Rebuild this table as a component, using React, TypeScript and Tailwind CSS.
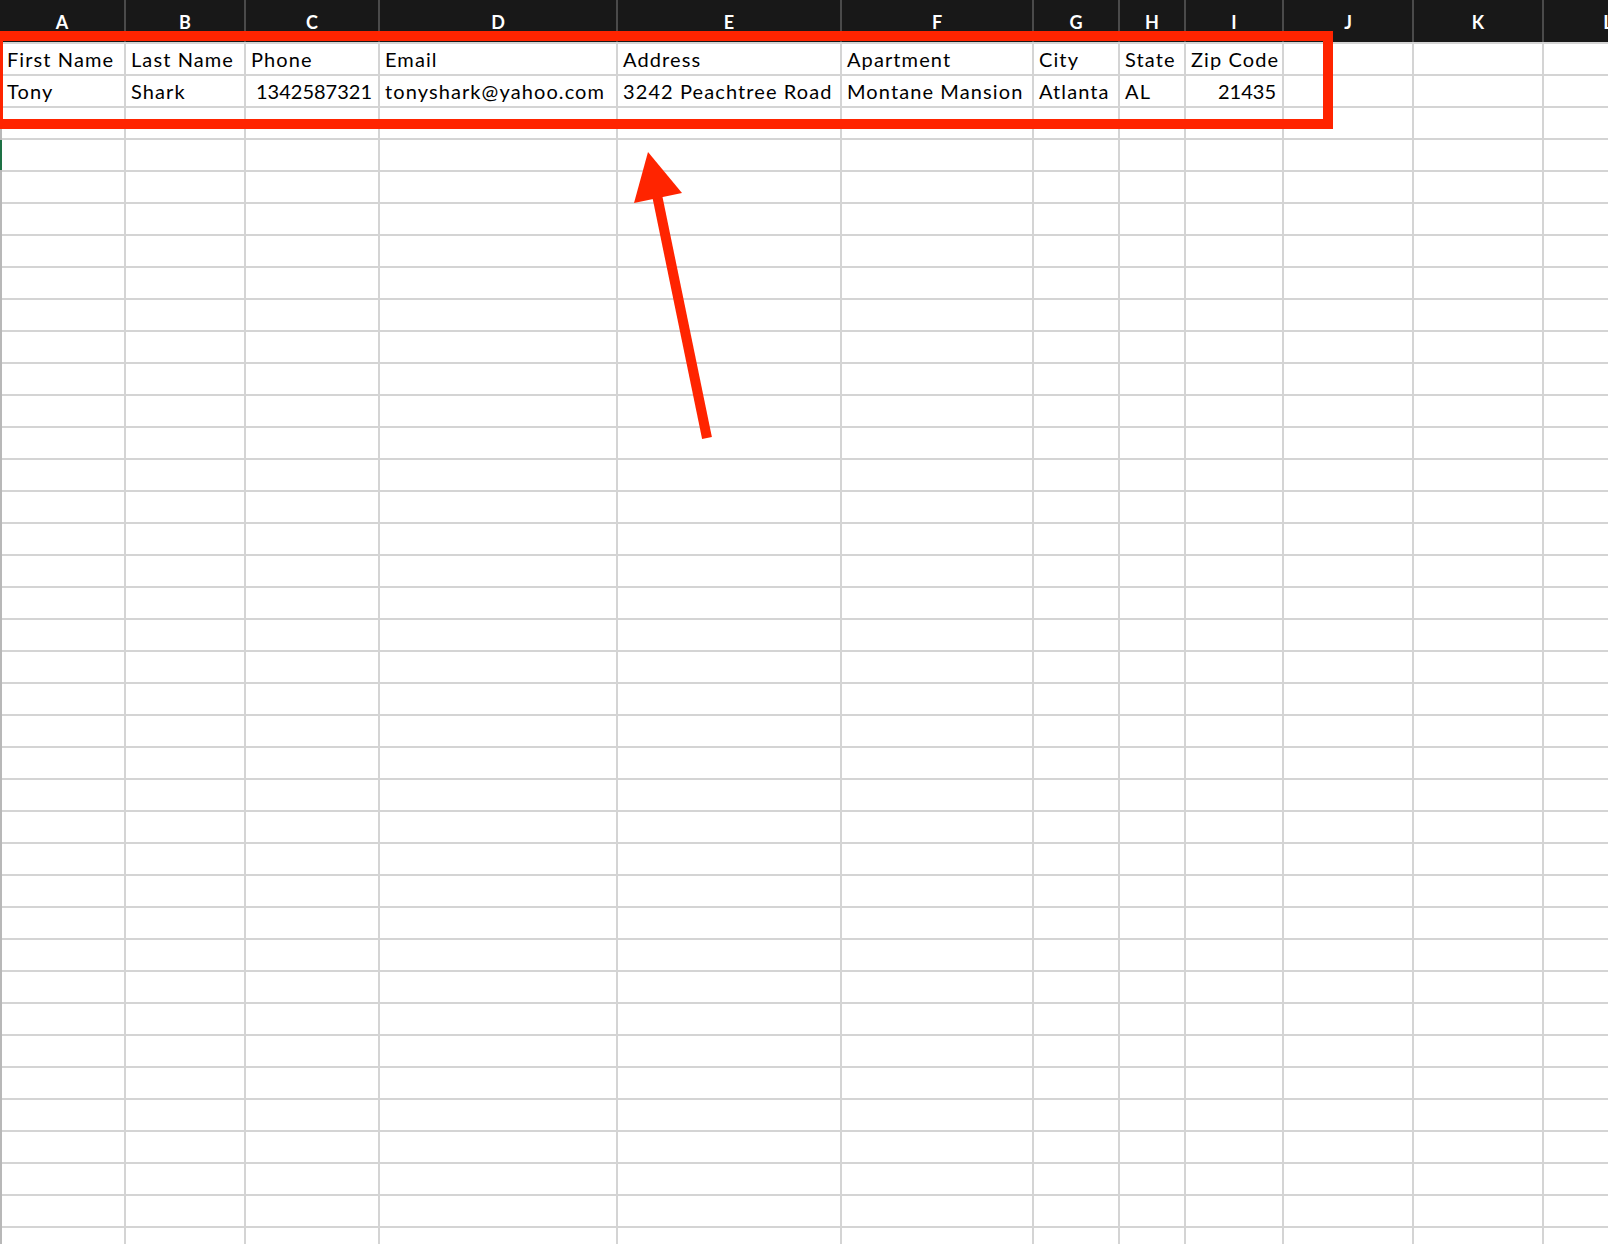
const columns = [
  { key: "A", width: 126 },
  { key: "B", width: 120 },
  { key: "C", width: 134 },
  { key: "D", width: 238 },
  { key: "E", width: 224 },
  { key: "F", width: 192 },
  { key: "G", width: 86 },
  { key: "H", width: 66 },
  { key: "I", width: 98 },
  { key: "J", width: 130 },
  { key: "K", width: 130 },
  { key: "L", width: 130 },
];

// cell values per row; right = numbers aligned right like Excel
const data: { text: string; right?: boolean }[][] = [
  [
    { text: "First Name" },
    { text: "Last Name" },
    { text: "Phone" },
    { text: "Email" },
    { text: "Address" },
    { text: "Apartment" },
    { text: "City" },
    { text: "State" },
    { text: "Zip Code" },
  ],
  [
    { text: "Tony" },
    { text: "Shark" },
    { text: "1342587321", right: true },
    { text: "tonyshark@yahoo.com" },
    { text: "3242 Peachtree Road" },
    { text: "Montane Mansion" },
    { text: "Atlanta" },
    { text: "AL" },
    { text: "21435", right: true },
  ],
];

const ROWS = 38;

export default function App() {
  return (
    <div
      className="relative w-[1608px] h-[1244px] overflow-hidden bg-white"
      style={{ fontFamily: "Lato, 'Open Sans', sans-serif" }}
    >
      {/* column letters */}
      <div className="flex h-[42px] bg-[#181818]">
        {columns.map((c) => (
          <div
            key={c.key}
            className="shrink-0 flex items-end justify-center pb-[11px] border-r-2 border-[#4a4a4a] text-white text-[18px] font-bold leading-none"
            style={{ width: c.width }}
          >
            {c.key}
          </div>
        ))}
      </div>

      {/* grid */}
      <div className="border-l-2 border-[#b8b8b8]">
        {Array.from({ length: ROWS }).map((_, r) => (
          <div key={r} className="flex h-[32px] border-t-2 border-[#d4d4d4]">
            {columns.map((c, ci) => {
              const cell = data[r]?.[ci];
              return (
                <div
                  key={c.key}
                  className={`shrink-0 flex items-end pb-[5px] border-r-2 border-[#d4d4d4] text-[20px] leading-[20px] text-black whitespace-nowrap overflow-hidden ${
                    cell?.right ? "justify-end pr-[6px]" : "pl-[5px] tracking-[1.1px]"
                  }`}
                  style={{ width: ci === 0 ? c.width - 2 : c.width }}
                >
                  {cell?.text}
                </div>
              );
            })}
          </div>
        ))}
      </div>

      {/* selected cell marker */}
      <div className="absolute left-0 top-[140px] w-[2px] h-[30px] bg-[#1e7145]" />

      {/* annotation box */}
      <div className="absolute left-[-7px] top-[31px] w-[1340px] h-[98px] border-[10px] border-[#ff2400]" />

      {/* annotation arrow */}
      <svg className="absolute left-0 top-0" width="1608" height="1244">
        <line x1="707" y1="438" x2="657" y2="195" stroke="#ff2400" strokeWidth="10" />
        <polygon points="648,152 634,203 682,193" fill="#ff2400" />
      </svg>
    </div>
  );
}
